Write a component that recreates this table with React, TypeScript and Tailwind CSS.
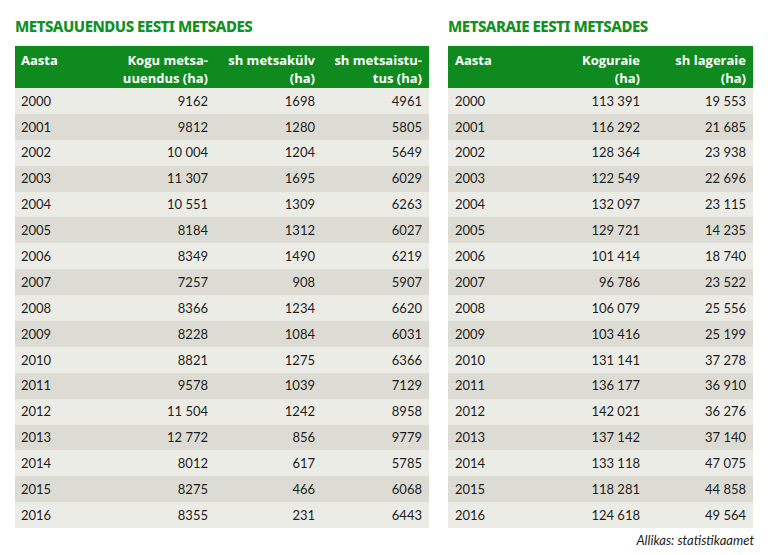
const renewal: [string, string, string, string][] = [
  ['2000', '9162', '1698', '4961'],
  ['2001', '9812', '1280', '5805'],
  ['2002', '10 004', '1204', '5649'],
  ['2003', '11 307', '1695', '6029'],
  ['2004', '10 551', '1309', '6263'],
  ['2005', '8184', '1312', '6027'],
  ['2006', '8349', '1490', '6219'],
  ['2007', '7257', '908', '5907'],
  ['2008', '8366', '1234', '6620'],
  ['2009', '8228', '1084', '6031'],
  ['2010', '8821', '1275', '6366'],
  ['2011', '9578', '1039', '7129'],
  ['2012', '11 504', '1242', '8958'],
  ['2013', '12 772', '856', '9779'],
  ['2014', '8012', '617', '5785'],
  ['2015', '8275', '466', '6068'],
  ['2016', '8355', '231', '6443'],
];

const felling: [string, string, string][] = [
  ['2000', '113 391', '19 553'],
  ['2001', '116 292', '21 685'],
  ['2002', '128 364', '23 938'],
  ['2003', '122 549', '22 696'],
  ['2004', '132 097', '23 115'],
  ['2005', '129 721', '14 235'],
  ['2006', '101 414', '18 740'],
  ['2007', '96 786', '23 522'],
  ['2008', '106 079', '25 556'],
  ['2009', '103 416', '25 199'],
  ['2010', '131 141', '37 278'],
  ['2011', '136 177', '36 910'],
  ['2012', '142 021', '36 276'],
  ['2013', '137 142', '37 140'],
  ['2014', '133 118', '47 075'],
  ['2015', '118 281', '44 858'],
  ['2016', '124 618', '49 564'],
];

function Title({ children }: { children: string }) {
  return (
    <h2 className="h-[46px] pt-[17px] text-[15px] leading-[18px] font-extrabold text-[#13901f] tracking-[-0.5px] [font-family:'Noto_Sans',sans-serif]">
      {children}
    </h2>
  );
}

export default function App() {
  return (
    <div className="w-[768px] h-[555px] bg-white text-[#1c1c1c] [font-family:Lato,sans-serif]">
      <div className="flex gap-[19px] pl-[15px]">
        <div className="w-[414px]">
          <Title>METSAUUENDUS EESTI METSADES</Title>
          <table className="w-full border-collapse table-fixed text-[13px]">
            <colgroup>
              <col className="w-[100px]" />
              <col className="w-[100px]" />
              <col className="w-[107px]" />
              <col className="w-[107px]" />
            </colgroup>
            <thead>
              <tr className="bg-[#0f8a1f] text-white font-bold text-[13px] leading-[17.5px] h-[42px] align-top [font-family:'Open_Sans',sans-serif]">
                <th className="text-left pl-[6px] pt-[6px] font-bold">Aasta</th>
                <th className="text-right pr-[7px] pt-[6px] font-bold">Kogu metsa-<br />uuendus (ha)</th>
                <th className="text-right pr-[7px] pt-[6px] font-bold">sh metsakülv<br />(ha)</th>
                <th className="text-right pr-[7px] pt-[6px] font-bold">sh metsaistu-<br />tus (ha)</th>
              </tr>
            </thead>
            <tbody>
              {renewal.map((r, i) => (
                <tr key={r[0]} className={i % 2 === 0 ? 'h-[25.9px] bg-[#ececE7]' : 'h-[25.9px] bg-[#dddcd4]'}>
                  <td className="pl-[6px] pt-[1px]">{r[0]}</td>
                  <td className="text-right pr-[7px] pt-[1px]">{r[1]}</td>
                  <td className="text-right pr-[7px] pt-[1px]">{r[2]}</td>
                  <td className="text-right pr-[7px] pt-[1px]">{r[3]}</td>
                </tr>
              ))}
            </tbody>
          </table>
        </div>
        <div className="w-[305px]">
          <Title>METSARAIE EESTI METSADES</Title>
          <table className="w-full border-collapse table-fixed text-[13px]">
            <colgroup>
              <col className="w-[99px]" />
              <col className="w-[100px]" />
              <col className="w-[106px]" />
            </colgroup>
            <thead>
              <tr className="bg-[#0f8a1f] text-white font-bold text-[13px] leading-[17.5px] h-[42px] align-top [font-family:'Open_Sans',sans-serif]">
                <th className="text-left pl-[7px] pt-[6px] font-bold">Aasta</th>
                <th className="text-right pr-[7px] pt-[6px] font-bold">Koguraie<br />(ha)</th>
                <th className="text-right pr-[7px] pt-[6px] font-bold">sh lageraie<br />(ha)</th>
              </tr>
            </thead>
            <tbody>
              {felling.map((r, i) => (
                <tr key={r[0]} className={i % 2 === 0 ? 'h-[25.9px] bg-[#ececE7]' : 'h-[25.9px] bg-[#dddcd4]'}>
                  <td className="pl-[7px] pt-[1px]">{r[0]}</td>
                  <td className="text-right pr-[7px] pt-[1px]">{r[1]}</td>
                  <td className="text-right pr-[7px] pt-[1px]">{r[2]}</td>
                </tr>
              ))}
            </tbody>
          </table>
          <p className="text-right italic text-[13px] mt-[3px] mr-[-1px]">Allikas: statistikaamet</p>
        </div>
      </div>
    </div>
  );
}
